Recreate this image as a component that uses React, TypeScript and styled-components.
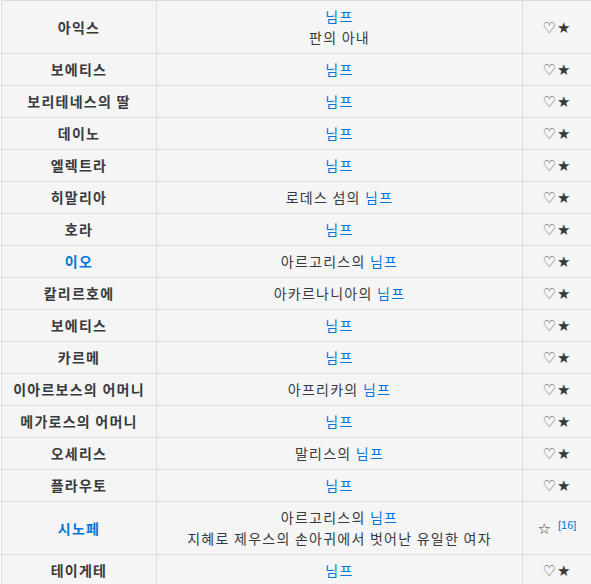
import React from "react";
import styled, { createGlobalStyle } from "styled-components";

const Global = createGlobalStyle`
  html, body { margin: 0; padding: 0; background: #fff; }
  body { font-family: "Noto Sans CJK KR", "Noto Sans", sans-serif; }
`;

const Wrap = styled.div`
  padding-left: 1px;
`;

const Table = styled.table`
  border-collapse: collapse;
  width: 590px;
  table-layout: fixed;
  background: #f5f5f5;
  font-size: 14px;
  line-height: 21px;
  color: #373a3c;
`;

const Cell = styled.td<{ $head?: boolean }>`
  border: 1px solid #dddddd;
  padding: 5px 4px;
  height: 21px;
  text-align: center;
  vertical-align: middle;
  letter-spacing: 1.25px;
  font-weight: ${(p) => (p.$head ? 700 : 400)};
  white-space: nowrap;
`;

const Link = styled.a`
  color: #0275d8;
  text-decoration: none;
`;

const Marks = styled.span`
  font-family: "DejaVu Sans", sans-serif;
  font-size: 15px;
  line-height: 12px;
  color: #373a3c;
  letter-spacing: 1px;
`;

const Ref = styled.sup`
  font-family: "Liberation Sans", Arial, sans-serif;
  font-size: 11px;
  letter-spacing: 0;
  color: #0275d8;
  margin-left: 6px;
  vertical-align: 5px;
  line-height: 0;
`;

type Row = { name: string; nameLink?: boolean; desc: React.ReactNode; ref?: boolean };

const N = <Link href="#">님프</Link>;

const rows: Row[] = [
  { name: "아익스", desc: <>{N}<br />판의 아내</> },
  { name: "보에티스", desc: N },
  { name: "보리테네스의 딸", desc: N },
  { name: "데이노", desc: N },
  { name: "엘렉트라", desc: N },
  { name: "히말리아", desc: <>로데스 섬의 {N}</> },
  { name: "호라", desc: N },
  { name: "이오", nameLink: true, desc: <>아르고리스의 {N}</> },
  { name: "칼리르호에", desc: <>아카르나니아의 {N}</> },
  { name: "보에티스", desc: N },
  { name: "카르메", desc: N },
  { name: "이아르보스의 어머니", desc: <>아프리카의 {N}</> },
  { name: "메가로스의 어머니", desc: N },
  { name: "오세리스", desc: <>말리스의 {N}</> },
  { name: "플라우토", desc: N },
  {
    name: "시노페",
    nameLink: true,
    desc: <>아르고리스의 {N}<br />지혜로 제우스의 손아귀에서 벗어난 유일한 여자</>,
    ref: true,
  },
  { name: "테이게테", desc: N },
];

export default function App() {
  return (
    <Wrap>
      <Global />
      <Table>
        <colgroup>
          <col style={{ width: 155 }} />
          <col style={{ width: 366 }} />
          <col style={{ width: 69 }} />
        </colgroup>
        <tbody>
          {rows.map((r, i) => (
            <tr key={i}>
              <Cell $head>{r.nameLink ? <Link href="#">{r.name}</Link> : r.name}</Cell>
              <Cell>{r.desc}</Cell>
              <Cell>
                {r.ref ? (
                  <>
                    <Marks>☆</Marks>
                    <Ref>[16]</Ref>
                  </>
                ) : (
                  <Marks>♡★</Marks>
                )}
              </Cell>
            </tr>
          ))}
        </tbody>
      </Table>
    </Wrap>
  );
}
